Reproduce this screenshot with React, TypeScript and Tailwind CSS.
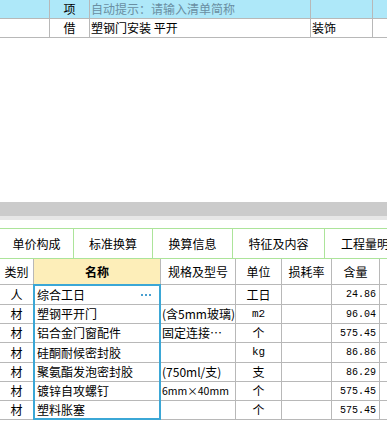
import React from 'react'

const cjk = { fontFamily: '"Noto Sans CJK SC", "Noto Sans", sans-serif' }
const mono = '[font-family:"Liberation_Mono","Noto_Sans_CJK_SC",monospace]'

const rows = [
  { type: '人', name: '综合工日', spec: '', unit: '工日', qty: '24.86', h: 'h-[20px]', dots: true },
  { type: '材', name: '塑钢平开门', spec: '(含5mm玻璃)', unit: 'm2', qty: '96.04', h: 'h-[19px]' },
  { type: '材', name: '铝合金门窗配件', spec: '固定连接…', unit: '个', qty: '575.45', h: 'h-[19px]' },
  { type: '材', name: '硅酮耐候密封胶', spec: '', unit: 'kg', qty: '86.86', h: 'h-[20px]' },
  { type: '材', name: '聚氨酯发泡密封胶', spec: '(750ml/支)', unit: '支', qty: '86.29', h: 'h-[19px]' },
  { type: '材', name: '镀锌自攻螺钉', spec: '6mm×40mm', unit: '个', qty: '575.45', h: 'h-[19px]' },
  { type: '材', name: '塑料胀塞', spec: '', unit: '个', qty: '575.45', h: 'h-[19px]' },
]

const tabs = [
  { label: '单价构成', w: 'w-[74px]' },
  { label: '标准换算', w: 'w-[79px]' },
  { label: '换算信息', w: 'w-[80px]' },
  { label: '特征及内容', w: 'w-[92px]' },
]

const cell = 'shrink-0 border-r border-[#b8b8b8] h-full flex items-center'

export default function App() {
  return (
    <div className="w-[387px] h-[429px] bg-white overflow-hidden text-[12px] text-black" style={cjk}>
      {/* bill rows */}
      <div className="flex h-[19px] bg-[#aee8f9] border-b border-[#b8b8b8]">
        <div className={`${cell} w-[50px]`} />
        <div className={`${cell} w-[40px] justify-center`}>项</div>
        <div className={`${cell} w-[221px] pl-[1px] text-[#6a8fa2]`}>自动提示：请输入清单简称</div>
        <div className={`${cell} w-[62px]`} />
        <div className="flex-1" />
      </div>
      <div className="flex h-[19px] border-b border-[#b8b8b8]">
        <div className={`${cell} w-[50px]`} />
        <div className={`${cell} w-[40px] justify-center`}>借</div>
        <div className={`${cell} w-[221px] pl-[1px] whitespace-pre`}>塑钢门安装 平开</div>
        <div className={`${cell} w-[62px] pl-[1px]`}>装饰</div>
        <div className="flex-1" />
      </div>

      <div className="h-[164px]" />

      {/* splitter */}
      <div className="h-[14px] bg-[#cbcbcb]" />
      <div className="h-[4px] bg-[#e6e6e6]" />
      <div className="h-[8px]" />

      {/* tabs */}
      <div className="flex h-[31px] border-y border-[#ace49a]">
        {tabs.map((t) => (
          <div
            key={t.label}
            className={`${t.w} shrink-0 h-full border-r border-[#ace49a] flex items-center justify-center`}
          >
            {t.label}
          </div>
        ))}
        <div className="flex-1 min-w-0 h-full flex items-center pl-[16px] whitespace-nowrap overflow-hidden">
          工程量明细
        </div>
      </div>

      {/* detail table */}
      <div className="flex h-[26px] border-b border-[#b8b8b8]">
        <div className={`${cell} w-[34px] justify-center`}>类别</div>
        <div className={`${cell} w-[127px] justify-center bg-[#fdeeb9] font-bold`}>名称</div>
        <div className={`${cell} w-[75px] justify-center`}>规格及型号</div>
        <div className={`${cell} w-[46px] justify-center`}>单位</div>
        <div className={`${cell} w-[50px] justify-center`}>损耗率</div>
        <div className={`${cell} w-[48px] justify-center`}>含量</div>
        <div className="flex-1" />
      </div>

      <div className="relative">
        {rows.map((r, i) => (
          <div key={i} className={`flex ${r.h} border-b border-[#b8b8b8]`}>
            <div className={`${cell} w-[34px] justify-center`}>{r.type}</div>
            <div className={`${cell} w-[127px] pl-[3px] justify-between pr-[9px]`}>
              <span>{r.name}</span>
              {r.dots && (
                <span className="flex gap-[2px]">
                  <span className="w-[2px] h-[2px] bg-[#4aa0d0]" />
                  <span className="w-[2px] h-[2px] bg-[#4aa0d0]" />
                  <span className="w-[2px] h-[2px] bg-[#4aa0d0]" />
                </span>
              )}
            </div>
            <div
              className={`${cell} w-[75px] pl-[1px] whitespace-nowrap overflow-hidden ${
                r.spec.startsWith('6mm') ? 'text-[10.5px]' : ''
              }`}
            >
              {r.spec}
            </div>
            <div className={`${cell} w-[46px] justify-center ${/^[a-z]/.test(r.unit) ? mono + ' text-[11px]' : ''}`}>
              {r.unit}
            </div>
            <div className={`${cell} w-[50px]`} />
            <div className={`${cell} w-[48px] justify-end pr-[3px] ${mono} text-[10px]`}>{r.qty}</div>
            <div className="flex-1" />
          </div>
        ))}
        <div className="absolute left-[33px] top-[-1px] w-[128px] h-[136px] border-2 border-[#3ba7d6] pointer-events-none" />
      </div>
    </div>
  )
}
